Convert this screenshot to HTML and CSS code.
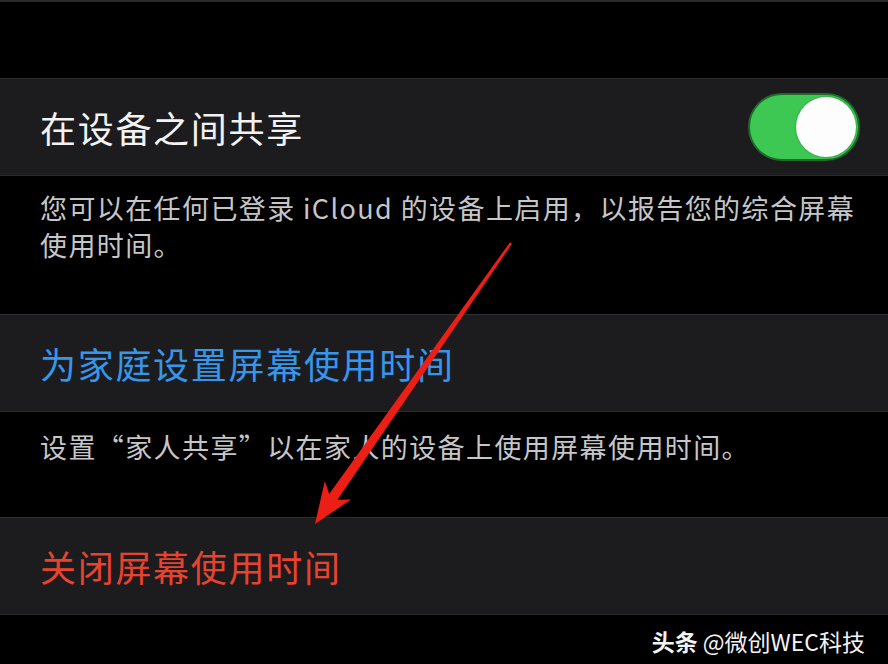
FILE: index.html
```html
<!DOCTYPE html>
<html>
<head>
<meta charset="utf-8">
<title>屏幕使用时间</title>
<link rel="stylesheet" href="styles.css">
</head>
<body>

<div class="screen">
  <div class="top-edge"></div>
  <div class="gap"></div>

  <div class="cell">
    <span class="cell-label">在设备之间共享</span>
    <div class="switch on"><div class="knob"></div></div>
  </div>
  <div class="note note-first">
    您可以在任何已登录 iCloud 的设备上启用，以报告您的综合屏幕<br>使用时间。
  </div>

  <div class="cell">
    <span class="cell-label link">为家庭设置屏幕使用时间</span>
  </div>
  <div class="note note-second">
    设置“家人共享”以在家人的设备上使用屏幕使用时间。
  </div>

  <div class="cell">
    <span class="cell-label danger">关闭屏幕使用时间</span>
  </div>

  <div class="watermark"><b>头条</b> @微创WEC科技</div>

  <!-- red annotation arrow drawn over the list -->
  <svg class="arrow" width="888" height="664" viewBox="0 0 888 664">
    <polygon fill="#ec1f17"
      points="512,243.8 337.4,499.7 351,499.4 315,524 324.8,481 329.2,493.9 510,242.2"/>
  </svg>
</div>

</body>
</html>
```

FILE: styles.css
```css
body {
    margin: 0;
    padding: 0;
    background-color: #000;
    font-family: "Noto Sans CJK SC", "Noto Sans", sans-serif;
}

.screen {
    position: relative;
    width: 888px;
    height: 664px;
    overflow: hidden;
    background-color: #000;
}

.top-edge {
    height: 2px;
    background-color: #2a2a2c;
}

.gap {
    height: 76px;
}

.cell {
    box-sizing: border-box;
    height: 98px;
    display: flex;
    align-items: center;
    justify-content: space-between;
    padding: 0 28px 0 40px;
    background-color: #1c1c1e;
    border-top: 1px solid #2e2e30;
    border-bottom: 1px solid #2a2a2c;
}

.cell-label {
    font-size: 36px;
    letter-spacing: 1.7px;
    color: #f2f2f2;
    line-height: 1;
}

.cell-label.link {
    color: #3596ec;
}

.cell-label.danger {
    color: #e8432f;
}

.switch {
    box-sizing: border-box;
    width: 112px;
    height: 68px;
    border-radius: 34px;
    background-color: #3cc852;
    border: 2px solid #1f6b2a;
    display: flex;
    align-items: center;
    justify-content: flex-end;
    padding-right: 2px;
}

.knob {
    width: 60px;
    height: 60px;
    border-radius: 50%;
    background-color: #fdfdfd;
    box-shadow: 0 0 2px rgba(0, 0, 0, 0.35);
}

.note {
    box-sizing: border-box;
    padding: 0 20px 0 40px;
    font-size: 27px;
    line-height: 37px;
    letter-spacing: 1.4px;
    color: #c6c6c8;
}

.note-first {
    height: 138px;
    padding-top: 13px;
}

.note-second {
    height: 105px;
    padding-top: 16px;
}

.watermark {
    height: 51px;
    display: flex;
    align-items: center;
    justify-content: flex-end;
    padding-right: 23px;
    font-family: "Noto Sans CJK SC", sans-serif;
    font-size: 23px;
    color: #f4f4f4;
    white-space: pre;
}

.watermark b {
    font-weight: 700;
}

.arrow {
    position: absolute;
    left: 0;
    top: 0;
    pointer-events: none;
}
```
